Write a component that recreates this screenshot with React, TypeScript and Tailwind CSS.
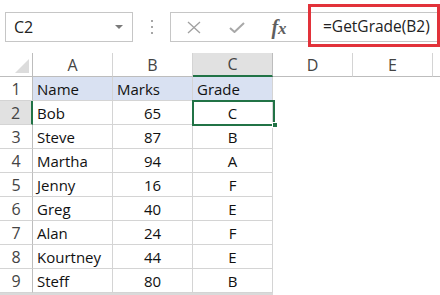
import React from 'react';

const FONT = { fontFamily: '"Open Sans", "Noto Sans", sans-serif' };

const DATA: [string, string, string][] = [
  ['Bob', '65', 'C'],
  ['Steve', '87', 'B'],
  ['Martha', '94', 'A'],
  ['Jenny', '16', 'F'],
  ['Greg', '40', 'E'],
  ['Alan', '24', 'F'],
  ['Kourtney', '44', 'E'],
  ['Steff', '80', 'B'],
];

const COLS = ['A', 'B', 'C', 'D', 'E'];

function TopBar() {
  return (
    <div className="flex items-start h-[53px] pt-[12px] pl-[5px]">
      {/* Name box */}
      <div className="relative w-[128px] h-[30px] border border-[#c6c6c6] flex items-center pl-[8px] text-[16px] text-[#222]">
        C2
        <svg className="absolute right-[9px] top-[12px]" width="8" height="5" viewBox="0 0 8 5">
          <path d="M0 0 L8 0 L4 4 Z" fill="#7a7a7a" />
        </svg>
      </div>
      {/* Splitter dots */}
      <div className="w-[37px] h-[30px] flex flex-col items-center justify-center gap-[4px]">
        <span className="w-[2px] h-[2px] bg-[#a6a6a6]" />
        <span className="w-[2px] h-[2px] bg-[#a6a6a6]" />
        <span className="w-[2px] h-[2px] bg-[#a6a6a6]" />
      </div>
      {/* Formula bar */}
      <div className="relative flex-1 h-[30px] border border-r-0 border-[#c6c6c6] flex items-center">
        <div className="w-[44px] flex justify-center pl-[2px]">
          <svg width="14" height="13" viewBox="0 0 14 13">
            <path d="M1 1 L13 12 M13 1 L1 12" stroke="#a0a0a0" strokeWidth="1.3" fill="none" />
          </svg>
        </div>
        <div className="w-[44px] flex justify-center">
          <svg width="16" height="11" viewBox="0 0 16 11">
            <path d="M1 6 L5.5 10 L15 1" stroke="#a8a8a8" strokeWidth="2" fill="none" />
          </svg>
        </div>
        <div
          className="w-[40px] flex items-baseline justify-center italic font-bold text-[#5f5f5f] leading-none"
          style={{ fontFamily: '"Liberation Serif", serif' }}
        >
          <span className="text-[20px]">f</span>
          <span className="text-[17px]">x</span>
        </div>
        <div className="flex-1 pl-[24px] text-[15.5px] text-[#222] whitespace-nowrap">=GetGrade(B2)</div>
        {/* red highlight box */}
        <div className="absolute left-[137px] top-[-9px] w-[132px] h-[43px] border-[3px] border-[#e2323a]" />
      </div>
    </div>
  );
}

function HeaderRow() {
  return (
    <div className="flex h-[24px]">
      <div className="w-[33px] border-r border-b border-[#bdbdbd] relative">
        <svg className="absolute right-[3px] bottom-[3px]" width="14" height="14" viewBox="0 0 14 14">
          <path d="M14 0 L14 14 L0 14 Z" fill="#dcdcdc" />
        </svg>
      </div>
      {COLS.map(c =>
        c === 'C' ? (
          <div
            key={c}
            className="w-[80px] bg-[#e1e1e1] border-r border-[#bdbdbd] border-b-2 border-b-[#217346] flex items-center justify-center text-[16px] text-[#444]"
          >
            {c}
          </div>
        ) : (
          <div
            key={c}
            className="w-[80px] border-r border-b border-[#d4d4d4] border-b-[#bdbdbd] flex items-center justify-center text-[16px] text-[#444]"
          >
            {c}
          </div>
        )
      )}
      <div className="flex-1 border-b border-[#bdbdbd]" />
    </div>
  );
}

function RowHead({ n }: { n: number }) {
  if (n === 2) {
    return (
      <div className="w-[33px] bg-[#e1e1e1] border-r-2 border-[#217346] border-b border-b-[#d4d4d4] flex items-center justify-center text-[16px] text-[#444]">
        {n}
      </div>
    );
  }
  return (
    <div className="w-[33px] border-r border-[#bdbdbd] border-b border-b-[#d4d4d4] flex items-center justify-center text-[16px] text-[#444]">
      {n}
    </div>
  );
}

export default function App() {
  return (
    <div className="w-[440px] h-[295px] bg-white overflow-hidden relative" style={FONT}>
      <TopBar />
      <HeaderRow />
      {/* row 1: table header */}
      <div className="flex h-[24px]">
        <RowHead n={1} />
        {['Name', 'Marks', 'Grade'].map(t => (
          <div
            key={t}
            className="w-[80px] bg-[#d9e1f2] border-r border-b border-[#d4d4d4] pl-[4px] pt-[2px] leading-[21px] text-[15px] text-[#111]"
          >
            {t}
          </div>
        ))}
      </div>
      {DATA.map((r, i) => (
        <div key={r[0]} className="flex h-[24px]">
          <RowHead n={i + 2} />
          <div className="w-[80px] border-r border-b border-[#d4d4d4] pl-[4px] pt-[2px] leading-[21px] text-[15px] text-[#111]">
            {r[0]}
          </div>
          <div className="w-[80px] border-r border-b border-[#d4d4d4] pt-[2px] leading-[21px] text-[15px] text-[#111] text-center">
            {r[1]}
          </div>
          <div className="w-[80px] border-r border-b border-[#d4d4d4] pt-[2px] leading-[21px] text-[15px] text-[#111] text-center">
            {r[2]}
          </div>
        </div>
      ))}
      <div className="w-[273px] h-[4px] bg-[#dadada]" />
      {/* active cell C2 */}
      <div className="absolute left-[192px] top-[100px] w-[83px] h-[26px] border-2 border-[#217346]" />
      <div className="absolute left-[272px] top-[122px] w-[6px] h-[6px] bg-[#217346] border border-white" />
    </div>
  );
}
